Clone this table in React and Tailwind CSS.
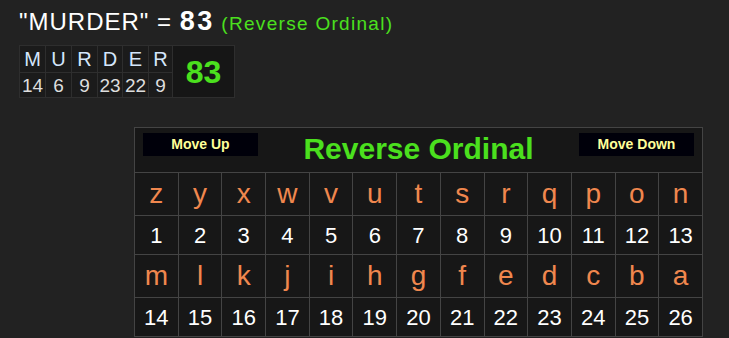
import React from "react";

const word = [
  { l: "M", n: 14, w: "w-[26px]" },
  { l: "U", n: 6, w: "w-[26px]" },
  { l: "R", n: 9, w: "w-[26px]" },
  { l: "D", n: 23, w: "w-[25px]" },
  { l: "E", n: 22, w: "w-[26px]" },
  { l: "R", n: 9, w: "w-[24px]" },
];

const rowA = "zyxwvutsrqpon".split("");
const rowB = "mlkjihgfedcba".split("");

const App = () => {
  return (
    <div
      className="w-[729px] h-[338px] bg-[#222222] overflow-hidden"
      style={{ fontFamily: '"Liberation Sans", Arial, sans-serif' }}
    >
      <div className="pl-[19px] pt-[6px] flex items-baseline whitespace-pre leading-[30px]">
        <span className="text-[24px] tracking-[1px] text-white">"MURDER" = </span>
        <span className="text-[27px] font-bold tracking-[2.5px] text-white">83</span>
        <span className="text-[19px] tracking-[1.3px] text-[#4be01e]"> (Reverse Ordinal)</span>
      </div>

      <div className="ml-[19px] mt-[6px] flex">
        <table className="border-collapse bg-[#1b1b1b]">
          <tbody>
            <tr className="h-[27px]">
              {word.map((c, i) => (
                <td
                  key={i}
                  className={`${c.w} border border-[#2e2e2e] p-0 text-center text-[20px] leading-none text-[#d4e6fb]`}
                >
                  {c.l}
                </td>
              ))}
              <td
                rowSpan={2}
                className="w-[62px] border border-[#2e2e2e] bg-[#161616] p-0 text-center text-[32px] font-bold text-[#4be01e]"
              >
                83
              </td>
            </tr>
            <tr className="h-[25px]">
              {word.map((c, i) => (
                <td
                  key={i}
                  className="border border-[#2e2e2e] p-0 text-center text-[19px] leading-none text-[#dedede]"
                >
                  {c.n}
                </td>
              ))}
            </tr>
          </tbody>
        </table>
      </div>

      <div className="ml-[134px] mt-[29px]">
        <table className="w-[569px] table-fixed border-collapse bg-[#171717]">
          <tbody>
            <tr className="h-[45px]">
              <td colSpan={13} className="border border-[#444] p-0 align-top">
                <div className="flex items-start justify-between px-[8px]">
                  <button className="mt-[5px] w-[115px] h-[23px] bg-[#00000a] text-[14px] font-bold text-[#ffff99]">
                    Move Up
                  </button>
                  <span className="mt-[6px] text-[30px] font-bold text-[#4be01e] leading-none">
                    Reverse Ordinal
                  </span>
                  <button className="mt-[5px] w-[115px] h-[23px] bg-[#00000a] text-[14px] font-bold text-[#ffff99]">
                    Move Down
                  </button>
                </div>
              </td>
            </tr>
            {[rowA, rowB].map((row, r) => (
              <React.Fragment key={r}>
                <tr className="h-[43px]">
                  {row.map((ch) => (
                    <td
                      key={ch}
                      className="border border-[#444] p-0 text-center text-[28px] text-[#f0874e]"
                    >
                      {ch}
                    </td>
                  ))}
                </tr>
                <tr className="h-[39px]">
                  {row.map((ch, i) => (
                    <td
                      key={ch}
                      className="border border-[#444] p-0 text-center text-[22px] text-white"
                    >
                      {r * 13 + i + 1}
                    </td>
                  ))}
                </tr>
              </React.Fragment>
            ))}
          </tbody>
        </table>
      </div>
    </div>
  );
};

export default App;
